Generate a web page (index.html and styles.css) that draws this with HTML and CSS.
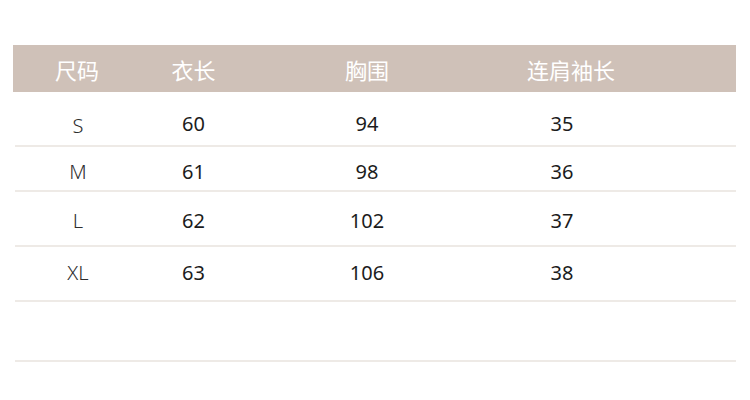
FILE: index.html
```html
<!DOCTYPE html>
<html lang="zh">
<head>
<meta charset="utf-8">
<link rel="stylesheet" href="styles.css">
</head>
<body>
<div class="chart">
  <div class="head">
    <div class="c1">尺码</div>
    <div class="c2">衣长</div>
    <div class="c3">胸围</div>
    <div class="c4">连肩袖长</div>
  </div>
  <div class="row r1">
    <div class="c1 size s-low">S</div>
    <div class="c2">60</div>
    <div class="c3">94</div>
    <div class="c4 d4">35</div>
  </div>
  <div class="row r2">
    <div class="c1 size">M</div>
    <div class="c2">61</div>
    <div class="c3">98</div>
    <div class="c4 d4">36</div>
  </div>
  <div class="row r3">
    <div class="c1 size">L</div>
    <div class="c2">62</div>
    <div class="c3">102</div>
    <div class="c4 d4">37</div>
  </div>
  <div class="row r4">
    <div class="c1 size">XL</div>
    <div class="c2">63</div>
    <div class="c3">106</div>
    <div class="c4 d4">38</div>
  </div>
  <div class="row r5"></div>
</div>
</body>
</html>
```
FILE: styles.css
```css
html, body {
  margin: 0;
  padding: 0;
  background: #ffffff;
}
body {
  font-family: "Noto Sans", "Noto Sans CJK SC", sans-serif;
  width: 750px;
  height: 400px;
  overflow: hidden;
}
.chart {
  padding-top: 45px;
  padding-left: 13px;
  width: 723px;
}
.head {
  display: grid;
  grid-template-columns: 128px 105px 242px 166px 1fr;
  height: 47px;
  align-items: center;
  background: #cfc1b8;
  color: #ffffff;
  font-family: "Noto Sans CJK SC", sans-serif;
  font-size: 22px;
  line-height: 22px;
}
.head > div {
  text-align: center;
  padding-top: 1px;
}
.row {
  display: grid;
  grid-template-columns: 126px 105px 242px 166px 1fr;
  align-items: start;
  margin-left: 2px;
  border-bottom: 2px solid #eeeae6;
  font-size: 20px;
  line-height: 20px;
  color: #1c1c1c;
  box-sizing: border-box;
}
.row > div {
  text-align: center;
}
.row .size {
  color: #2e2e2e;
  font-weight: 300;
}
.row .s-low {
  padding-top: 2px;
}
.row .d4 {
  padding-right: 18px;
}
.r1 { height: 55px; padding-top: 22px; }
.r2 { height: 45px; padding-top: 15px; }
.r3 { height: 55px; padding-top: 19px; }
.r4 { height: 55px; padding-top: 16px; }
.r5 { height: 60px; }
```
